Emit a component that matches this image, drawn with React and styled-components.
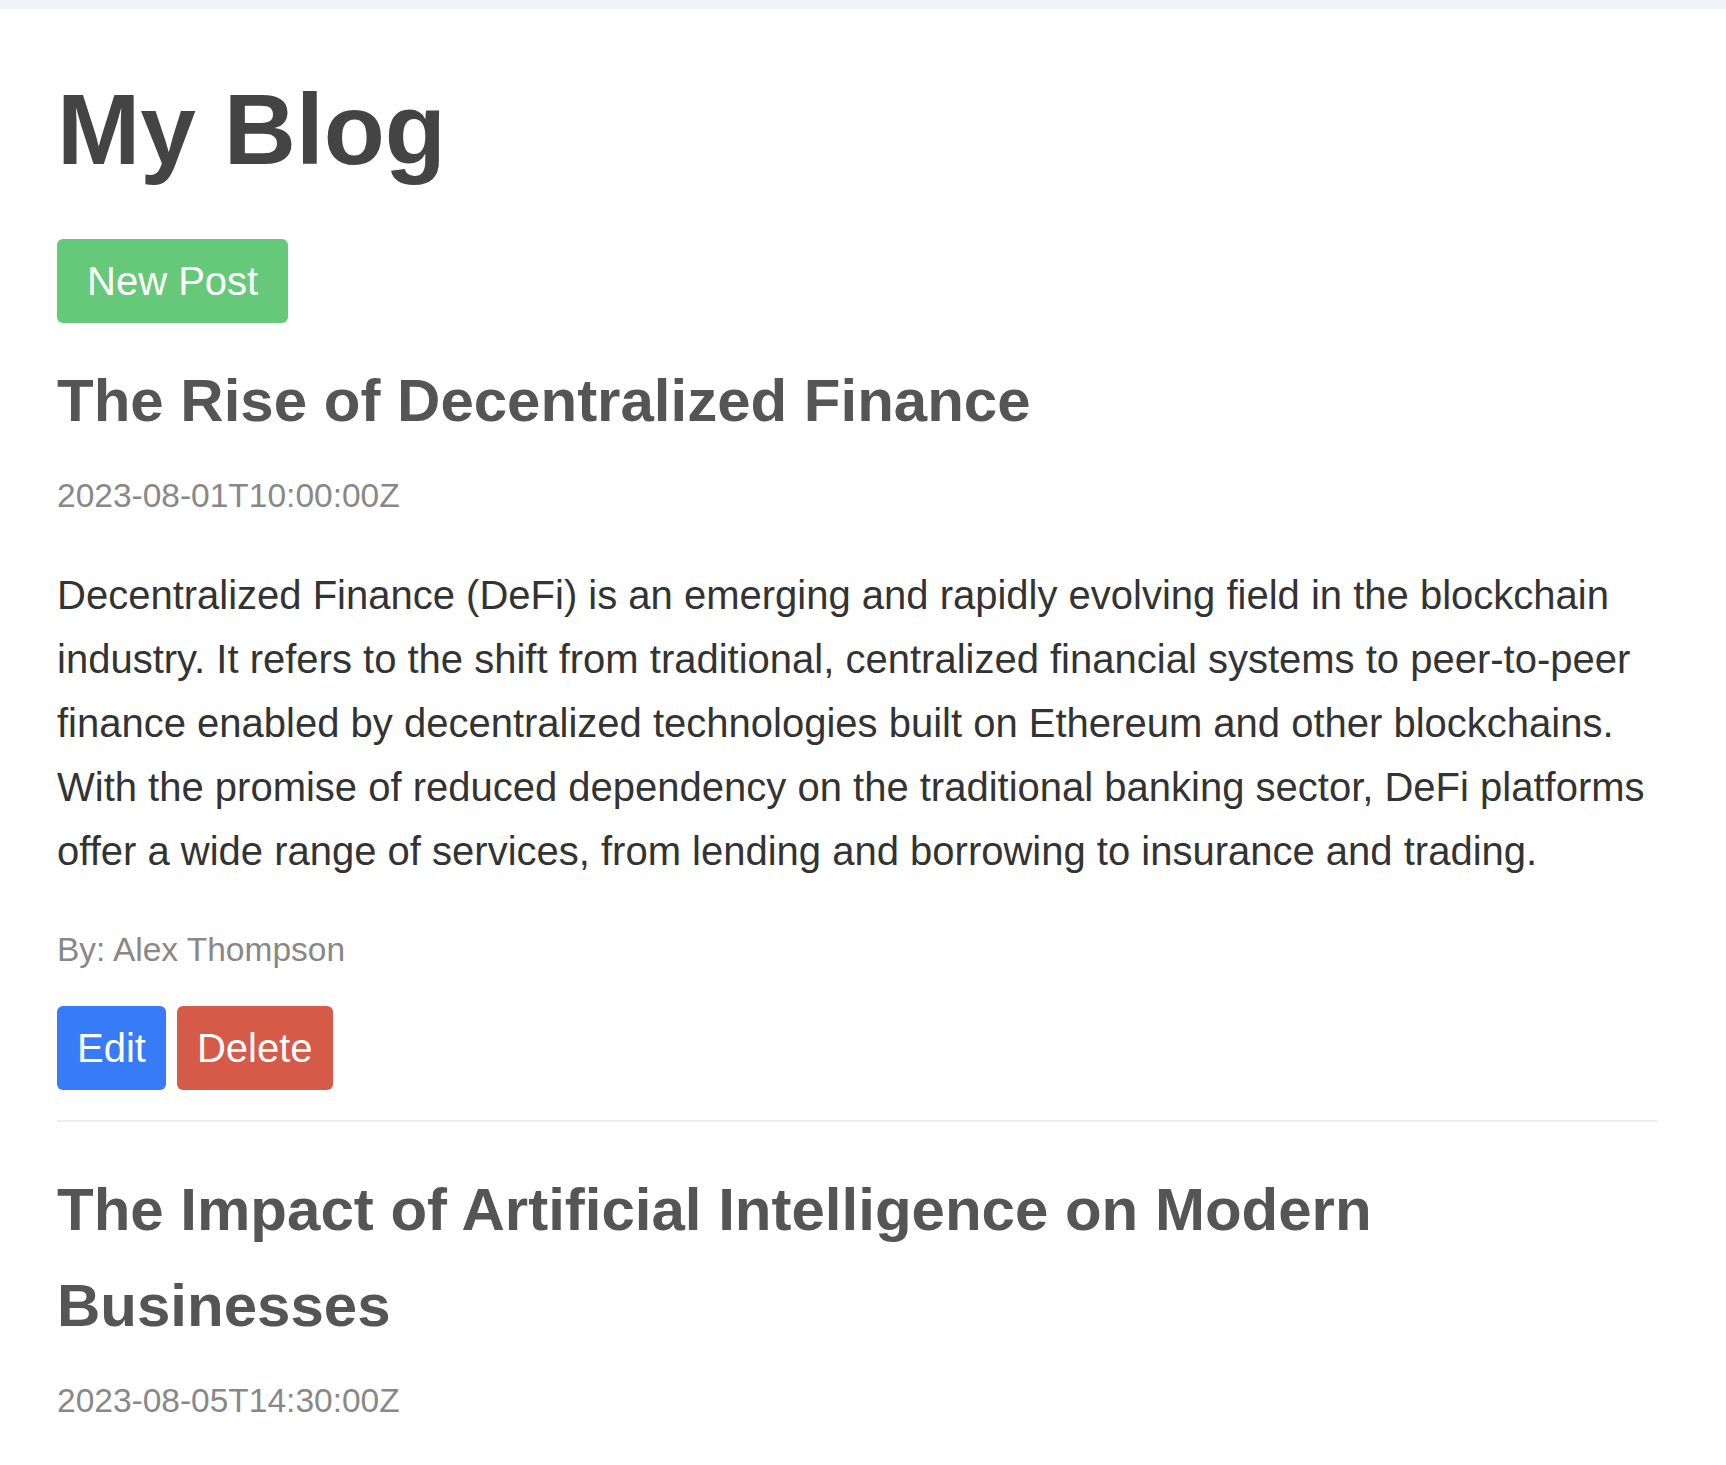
import React from "react";
import styled, { createGlobalStyle } from "styled-components";

const GlobalStyle = createGlobalStyle`
  html {
    scrollbar-width: none;
  }
  html::-webkit-scrollbar {
    display: none;
  }
  body {
    margin: 0;
    background: #ffffff;
    font-family: "Liberation Sans", Arial, Helvetica, sans-serif;
    line-height: 1.6;
    color: #333333;
  }
  * {
    box-sizing: border-box;
  }
`;

const TopStrip = styled.div`
  height: 9px;
  background: #f1f3f6;
`;

const Page = styled.main`
  padding: 40px 0 40px 57px;
  max-width: 1657px;
`;

const BlogTitle = styled.h1`
  margin: 0 0 30px;
  font-size: 100px;
  font-weight: 700;
  line-height: 1.6;
  color: #444444;
`;

const Button = styled.button`
  display: block;
  border: none;
  border-radius: 6px;
  font-family: inherit;
  font-size: 40px;
  line-height: 64px;
  color: #ffffff;
  cursor: pointer;
  background: ${(p) =>
    p.$variant === "edit"
      ? "#377cf6"
      : p.$variant === "delete"
      ? "#d65a48"
      : "#66c97a"};
  padding: ${(p) => (p.$variant ? "10px 20px" : "10px 30px")};
`;

const NewPostButton = styled(Button)`
  margin-bottom: 30px;
`;

const PostList = styled.section`
  display: flex;
  flex-direction: column;
`;

const PostCard = styled.article`
  padding-bottom: 30px;
  margin-bottom: 40px;
  border-bottom: 2px solid #eeeeee;
`;

const PostTitle = styled.h2`
  margin: 0 0 20px;
  font-size: 60px;
  font-weight: 700;
  line-height: 1.6;
  color: #555555;
`;

const Meta = styled.p`
  margin: 0 0 ${(p) => p.$after}px;
  font-size: 33.5px;
  line-height: 1.6;
  color: #888888;
`;

const PostBody = styled.p`
  margin: 0 0 40px;
  font-size: 40px;
  line-height: 1.6;
  color: #333333;
`;

const Actions = styled.div`
  display: flex;
  gap: 11px;
`;

const posts = [
  {
    id: 1,
    title: "The Rise of Decentralized Finance",
    date: "2023-08-01T10:00:00Z",
    content:
      "Decentralized Finance (DeFi) is an emerging and rapidly evolving field in the blockchain industry. It refers to the shift from traditional, centralized financial systems to peer-to-peer finance enabled by decentralized technologies built on Ethereum and other blockchains. With the promise of reduced dependency on the traditional banking sector, DeFi platforms offer a wide range of services, from lending and borrowing to insurance and trading.",
    author: "Alex Thompson",
  },
  {
    id: 2,
    title: "The Impact of Artificial Intelligence on Modern Businesses",
    date: "2023-08-05T14:30:00Z",
    content:
      "Artificial Intelligence (AI) is no longer a concept of the future. It is already transforming the way companies operate, from automating routine tasks to providing deep insights from data. Businesses that adopt AI can improve efficiency, personalize customer experiences and make faster, better-informed decisions.",
    author: "Sarah Mitchell",
  },
];

function Post({ post }) {
  return (
    <PostCard>
      <PostTitle>{post.title}</PostTitle>
      <Meta $after={40}>{post.date}</Meta>
      <PostBody>{post.content}</PostBody>
      <Meta $after={30}>By: {post.author}</Meta>
      <Actions>
        <Button $variant="edit">Edit</Button>
        <Button $variant="delete">Delete</Button>
      </Actions>
    </PostCard>
  );
}

export default function App() {
  return (
    <>
      <GlobalStyle />
      <TopStrip />
      <Page>
        <BlogTitle>My Blog</BlogTitle>
        <NewPostButton>New Post</NewPostButton>
        <PostList>
          {posts.map((post) => (
            <Post key={post.id} post={post} />
          ))}
        </PostList>
      </Page>
    </>
  );
}
